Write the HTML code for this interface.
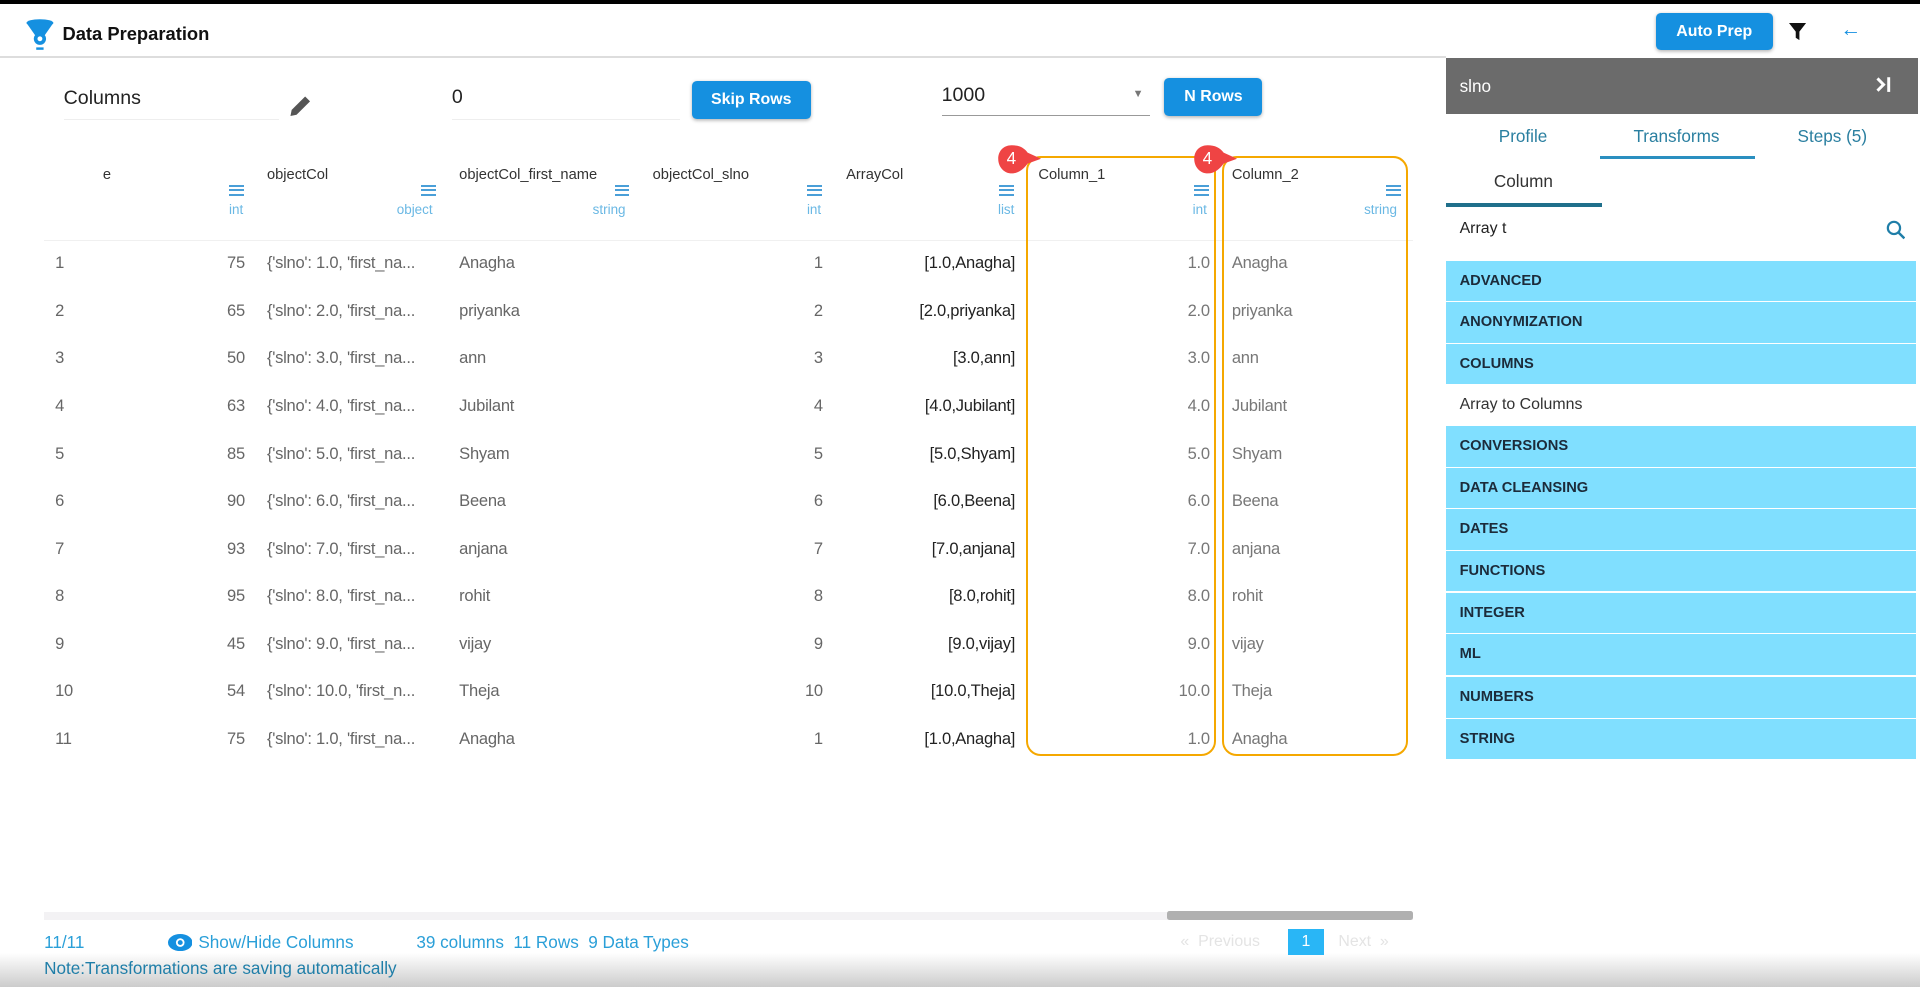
<!DOCTYPE html>
<html><head><meta charset="utf-8">
<style>
html,body{margin:0;padding:0;width:1920px;height:987px;overflow:hidden;background:#fff}
#w{zoom:1.22449;width:1568px;height:806px;position:relative;font-family:"Liberation Sans",sans-serif;color:#333;overflow:hidden}
.a{position:absolute;white-space:nowrap}
.btn{position:absolute;background:#1590e0;color:#fff;font-size:13px;font-weight:bold;border-radius:4px;display:flex;align-items:center;justify-content:center;box-shadow:0 1px 3px rgba(0,0,0,.3)}
.hn{font-size:12px;color:#333;top:136px}
.mi{position:absolute;top:151px;width:12px;height:9px;border-top:2px solid #4a9fd8;border-bottom:2px solid #4a9fd8;box-sizing:border-box}
.mi:after{content:"";position:absolute;left:0;right:0;top:1.5px;height:2px;background:#4a9fd8}
.ty{font-size:11px;color:#6ab8e4;top:165px}
.c{font-size:13.5px;color:#666;letter-spacing:-0.2px}
.cat{position:absolute;left:1181px;width:384px;height:33px;background:#80dfff;font-size:12px;font-weight:bold;color:#1c2b3a;line-height:33px;padding-left:11px;box-sizing:border-box}
.bt{position:absolute;color:#fff;font-size:14px;width:22px;text-align:center}
</style></head><body><div id="w">
<div class="a" style="left:0;top:0;width:1568px;height:3px;background:#000"></div>
<svg class="a" style="left:20px;top:15px" width="26" height="27" viewBox="0 0 26 27"><ellipse cx="13" cy="4" rx="11" ry="3" fill="#1590e0"/><path d="M2 4 L9 14 L17 14 L24 4 Z" fill="#1590e0"/><circle cx="13" cy="17" r="5" fill="#1590e0"/><circle cx="13" cy="17" r="2" fill="#fff"/><rect x="10" y="24" width="6" height="2" fill="#1590e0"/></svg>
<div class="a" style="left:51px;top:19px;font-size:15px;font-weight:bold;color:#111">Data Preparation</div>
<div class="a" style="left:0;top:46px;width:1181px;height:1px;background:#ddd"></div>
<div class="btn" style="left:1352px;top:11px;width:96px;height:30px">Auto Prep</div>
<svg class="a" style="left:1461px;top:19px" width="14" height="14" viewBox="0 0 14 14"><path d="M0 0H14L8.5 7V14L5.5 12V7Z" fill="#111"/></svg>
<div class="a" style="left:1503px;top:15px;font-size:17px;color:#1590e0">←</div>
<div class="a" style="left:52px;top:71px;font-size:16px;color:#222">Columns</div>
<div class="a" style="left:52px;top:97px;width:176px;height:1px;background:#eee"></div>
<svg class="a" style="left:235px;top:77px" width="20" height="20" viewBox="0 0 20 20"><path d="M2 18 L3 13 L14 2 L18 6 L7 17 Z" fill="#555"/></svg>
<div class="a" style="left:369px;top:70px;font-size:16px;color:#222">0</div>
<div class="a" style="left:369px;top:97px;width:186px;height:1px;background:#eee"></div>
<div class="btn" style="left:565px;top:66px;width:97px;height:31px">Skip Rows</div>
<div class="a" style="left:769px;top:69px;font-size:16px;color:#222">1000</div>
<div class="a" style="left:925px;top:72px;font-size:9px;color:#777">▼</div>
<div class="a" style="left:769px;top:94px;width:170px;height:1px;background:#999"></div>
<div class="btn" style="left:951px;top:64px;width:80px;height:31px">N Rows</div>
<div class="a hn" style="left:84px">e</div>
<div class="mi" style="left:187px"></div><div class="a ty" style="left:187px">int</div>
<div class="a hn" style="left:218px">objectCol</div>
<div class="mi" style="left:344px"></div><div class="a ty" style="left:324px">object</div>
<div class="a hn" style="left:375px">objectCol_first_name</div>
<div class="mi" style="left:502px"></div><div class="a ty" style="left:484px">string</div>
<div class="a hn" style="left:533px">objectCol_slno</div>
<div class="mi" style="left:659px"></div><div class="a ty" style="left:659px">int</div>
<div class="a hn" style="left:691px">ArrayCol</div>
<div class="mi" style="left:816px"></div><div class="a ty" style="left:815px">list</div>
<div class="a hn" style="left:848px">Column_1</div>
<div class="mi" style="left:975px"></div><div class="a ty" style="left:974px">int</div>
<div class="a hn" style="left:1006px">Column_2</div>
<div class="mi" style="left:1132px"></div><div class="a ty" style="left:1114px">string</div>
<div class="a" style="left:36px;top:196px;width:1118px;height:1px;background:#f0f0f0"></div>
<div class="a" style="left:838px;top:127px;width:152px;height:487px;border:2px solid #f5a800;border-radius:12px"></div>
<div class="a" style="left:998px;top:127px;width:149px;height:487px;border:2px solid #f5a800;border-radius:12px"></div>
<svg class="a" style="left:814px;top:118px" width="38" height="26" viewBox="0 0 38 26"><path d="M12 1 C5 1 1 6 1 12 C1 19 6 24 12 24 C18 24 22 20 25 16 L36 12 L25 7 C22 3 18 1 12 1Z" fill="#ef4444"/></svg>
<div class="bt" style="left:815px;top:121px">4</div>
<svg class="a" style="left:974px;top:118px" width="38" height="26" viewBox="0 0 38 26"><path d="M12 1 C5 1 1 6 1 12 C1 19 6 24 12 24 C18 24 22 20 25 16 L36 12 L25 7 C22 3 18 1 12 1Z" fill="#ef4444"/></svg>
<div class="bt" style="left:975px;top:121px">4</div>
<div id="rows"></div>
<script>
var d=[[75,"1.0","Anagha",1],[65,"2.0","priyanka",2],[50,"3.0","ann",3],[63,"4.0","Jubilant",4],[85,"5.0","Shyam",5],[90,"6.0","Beena",6],[93,"7.0","anjana",7],[95,"8.0","rohit",8],[45,"9.0","vijay",9],[54,"10.0","Theja",10],[75,"1.0","Anagha",1]];
var h="";
d.forEach(function(r,i){var y=207+38.8*i;
var oc="{'slno': "+r[1]+", 'first_na...";if(r[1]=="10.0")oc="{'slno': 10.0, 'first_n...";
h+='<div class="a c" style="left:45px;top:'+y+'px">'+(i+1)+'</div>';
h+='<div class="a c" style="right:'+(1568-200)+'px;top:'+y+'px">'+r[0]+'</div>';
h+='<div class="a c" style="left:218px;top:'+y+'px">'+oc+'</div>';
h+='<div class="a c" style="left:375px;top:'+y+'px">'+r[2]+'</div>';
h+='<div class="a c" style="right:'+(1568-672)+'px;top:'+y+'px">'+r[3]+'</div>';
h+='<div class="a c" style="right:'+(1568-829)+'px;top:'+y+'px;color:#222">['+r[1]+','+r[2]+']</div>';
h+='<div class="a c" style="right:'+(1568-988)+'px;top:'+y+'px;color:#777">'+r[1]+'</div>';
h+='<div class="a c" style="left:1006px;top:'+y+'px;color:#777">'+r[2]+'</div>';});
document.getElementById("rows").innerHTML=h;
</script>
<div class="a" style="left:36px;top:745px;width:1118px;height:6px;background:#f3f2f4"></div>
<div class="a" style="left:953px;top:744px;width:201px;height:7px;background:#b0b0b0;border-radius:2px"></div>
<div class="a" style="left:0;top:778px;width:1568px;height:28px;background:linear-gradient(#fff,#ccc)"></div>
<div class="a" style="left:36px;top:761px;font-size:14px;color:#2a9fd8">11/11</div>
<svg class="a" style="left:137px;top:763px" width="20" height="14" viewBox="0 0 20 14"><ellipse cx="10" cy="7" rx="10" ry="7" fill="#1590e0"/><circle cx="10" cy="7" r="3.5" fill="#fff"/><circle cx="10" cy="7" r="2" fill="#1590e0"/></svg>
<div class="a" style="left:162px;top:761px;font-size:14px;color:#2a9fd8">Show/Hide Columns</div>
<div class="a" style="left:340px;top:761px;font-size:14px;color:#2a9fd8">39 columns&nbsp; 11 Rows&nbsp; 9 Data Types</div>
<div class="a" style="left:964px;top:762px;font-size:13px;color:#e4e4e4">« &nbsp;Previous</div>
<div class="a" style="left:1052px;top:759px;width:29px;height:21px;background:#29b6f6;color:#fff;font-size:13px;text-align:center;line-height:21px">1</div>
<div class="a" style="left:1093px;top:762px;font-size:13px;color:#e4e4e4">Next &nbsp;»</div>
<div class="a" style="left:36px;top:782px;font-size:14px;color:#1f7ea8">Note:Transformations are saving automatically</div>
<div class="a" style="left:1181px;top:47px;width:385px;height:46px;background:#6b6b6b"></div>
<div class="a" style="left:1192px;top:62px;font-size:14px;color:#fff">slno</div>
<svg class="a" style="left:1531px;top:62px" width="14" height="14" viewBox="0 0 14 14"><path d="M2 2 L7 7 L2 12" fill="none" stroke="#fff" stroke-width="2.4"/><rect x="10" y="1" width="2.4" height="12" fill="#fff"/></svg>
<div class="a" style="left:1224px;top:103px;font-size:14px;color:#2a7fa0">Profile</div>
<div class="a" style="left:1334px;top:103px;font-size:14px;color:#2a7fa0">Transforms</div>
<div class="a" style="left:1307px;top:127px;width:126px;height:3px;background:#2a8fc0"></div>
<div class="a" style="left:1468px;top:103px;font-size:14px;color:#2a7fa0">Steps (5)</div>
<div class="a" style="left:1220px;top:140px;font-size:14px;color:#333">Column</div>
<div class="a" style="left:1181px;top:166px;width:127px;height:3px;background:#1f6f8b"></div>
<div class="a" style="left:1192px;top:180px;font-size:13px;color:#222">Array t</div>
<svg class="a" style="left:1540px;top:180px" width="16" height="16" viewBox="0 0 16 16"><circle cx="6.5" cy="6.5" r="5" fill="none" stroke="#1f7ea8" stroke-width="1.8"/><path d="M10 10L15 15" stroke="#1f7ea8" stroke-width="2"/></svg>
<div class="cat" style="top:213px">ADVANCED</div>
<div class="cat" style="top:247px">ANONYMIZATION</div>
<div class="cat" style="top:281px">COLUMNS</div>
<div class="a" style="left:1192px;top:323px;font-size:13px;color:#333">Array to Columns</div>
<div class="cat" style="top:348px">CONVERSIONS</div>
<div class="cat" style="top:382px">DATA CLEANSING</div>
<div class="cat" style="top:416px">DATES</div>
<div class="cat" style="top:450px">FUNCTIONS</div>
<div class="cat" style="top:484px">INTEGER</div>
<div class="cat" style="top:518px">ML</div>
<div class="cat" style="top:553px">NUMBERS</div>
<div class="cat" style="top:587px">STRING</div>
</div></body></html>
